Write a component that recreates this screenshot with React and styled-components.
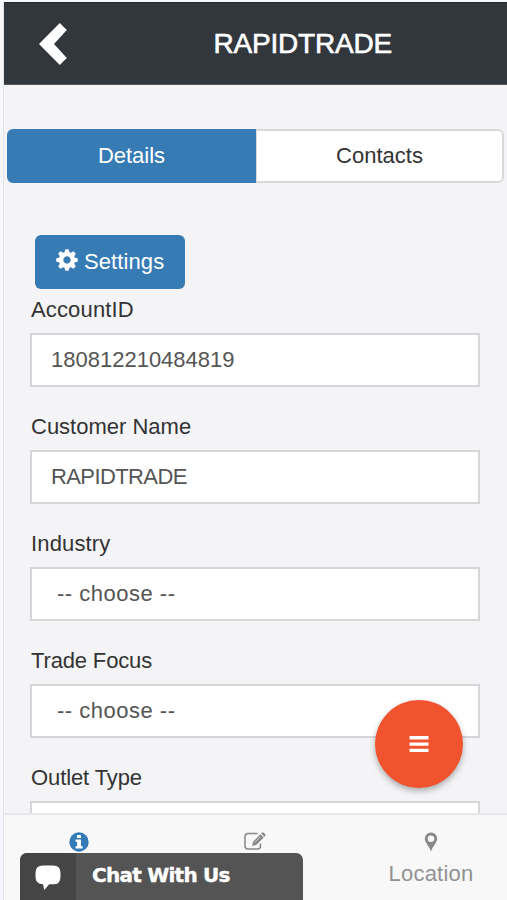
import React, { Component } from 'react';
import styled, { createGlobalStyle } from 'styled-components';

const GlobalStyle = createGlobalStyle`
  * {
    box-sizing: border-box;
  }
  body {
    margin: 0;
    overflow: hidden;
    background: #f4f5f8;
    font-family: "Liberation Sans", Arial, sans-serif;
    font-size: 22px;
    color: #333;
  }
  button, input {
    font: inherit;
  }
`;

const Frame = styled.div`
  height: 900px;
  padding: 2px 0 0 3px;
  background: #f6f7fa;
`;

const Screen = styled.div`
  position: relative;
  display: flex;
  flex-direction: column;
  height: 100%;
  border-left: 1px solid #e1e2e5;
  background: #f4f4f6;
  overflow: hidden;
`;

const Header = styled.header`
  flex: none;
  display: flex;
  align-items: center;
  height: 83px;
  padding: 0 115px 0 35px;
  background: #32373d;
  border-top: 1px solid #24292d;
  border-bottom: 1px solid #54585c;
`;

const BackButton = styled.button`
  display: flex;
  padding: 1px 0 0;
  border: none;
  background: none;
`;

const Title = styled.h1`
  flex: 1;
  margin: 0;
  font-size: 28px;
  font-weight: 400;
  line-height: 40px;
  letter-spacing: -0.2px;
  text-align: right;
  color: #fff;
  -webkit-text-stroke: 0.6px #fff;
`;

const Content = styled.main`
  flex: 1;
  min-height: 0;
  padding: 44px 3px 0;
  overflow: hidden;
`;

const Segments = styled.div`
  display: flex;
  height: 54px;
`;

const Segment = styled.button`
  flex: 1;
  padding: 0;
  border: 2px solid ${p => (p.$active ? '#377bb5' : '#d9d9db')};
  border-left-width: ${p => (p.$active ? '2px' : '1px')};
  border-radius: ${p => (p.$active ? '6px 0 0 6px' : '0 6px 6px 0')};
  background: ${p => (p.$active ? '#377bb5' : '#fff')};
  color: ${p => (p.$active ? '#fff' : '#333')};
`;

const Form = styled.form`
  display: flex;
  flex-direction: column;
  padding: 52px 23px 0;
`;

const SettingsButton = styled.button`
  display: flex;
  align-items: center;
  align-self: flex-start;
  gap: 6px;
  width: 150px;
  height: 54px;
  margin-left: 5px;
  padding: 0 0 0 21px;
  border: none;
  border-radius: 6px;
  background: #377bb5;
  color: #fff;
  letter-spacing: 0.1px;
`;

const Field = styled.label`
  display: flex;
  flex-direction: column;
  flex: none;
  height: 117px;
`;

const Label = styled.span`
  height: 44px;
  padding: 5px 0 0 1px;
  line-height: 32px;
  letter-spacing: ${p => p.$tracking || 0}px;
`;

const Input = styled.input`
  width: 450px;
  height: 54px;
  padding: 0 0 0 ${p => (p.$select ? '25px' : '19px')};
  border: 2px solid #d6d6d8;
  border-radius: 0;
  background: #fff;
  color: #555;
  letter-spacing: ${p => p.$tracking || 0}px;
  outline: none;
`;

const TabBar = styled.nav`
  flex: none;
  display: flex;
  height: 87px;
  border-top: 2px solid #e7e7e9;
  background: #f8f8f8;
`;

const Tab = styled.div`
  flex: none;
  display: flex;
  flex-direction: column;
  align-items: center;
  width: 176px;
  margin-left: ${p => (p.$first ? '-13px' : '0')};
  padding-top: 17px;
  color: ${p => (p.$active ? '#337ab7' : '#888')};
`;

const TabLabel = styled.span`
  margin-top: 8px;
  line-height: 28px;
  letter-spacing: 0.25px;
  color: #929292;
`;

const MenuButton = styled.button`
  position: absolute;
  right: 44px;
  bottom: 112px;
  display: flex;
  align-items: center;
  justify-content: center;
  width: 88px;
  height: 88px;
  padding: 0;
  border: none;
  border-radius: 50%;
  background: #f0532d;
  box-shadow: 0 3px 6px rgba(0, 0, 0, 0.3);
`;

const Chat = styled.div`
  position: absolute;
  left: 16px;
  bottom: 0;
  display: flex;
  width: 283px;
  height: 47px;
  border-radius: 7px 7px 0 0;
  background: #545454;
  overflow: hidden;
`;

const ChatIcon = styled.div`
  width: 56px;
  padding: 12px 0 0 15px;
  background: #454545;
`;

const ChatText = styled.span`
  padding-left: 16px;
  font-family: "DejaVu Sans", Verdana, sans-serif;
  font-size: 20px;
  font-weight: 700;
  line-height: 45px;
  letter-spacing: -0.75px;
  white-space: nowrap;
  color: #fff;
  -webkit-text-stroke: 0.4px #fff;
`;

const ChevronIcon = () => (
  <svg width="28" height="42" viewBox="0 0 28 42" fill="#fff">
    <path d="M20.8 0 27.8 7 15 21l12.8 14-7 7L0 21z" />
  </svg>
);

const CogIcon = () => (
  <svg width="22" height="22" viewBox="-11 -11 22 22" style={{ marginTop: -4 }}>
    <circle r="5.9" fill="none" stroke="#fff" strokeWidth="4.4" />
    {[0, 45, 90, 135, 180, 225, 270, 315].map(angle => (
      <path key={angle} d="M-2.7-7-1.6-10.8h3.2L2.7-7z" fill="#fff" transform={`rotate(${angle})`} />
    ))}
  </svg>
);

const InfoIcon = () => (
  <svg width="20" height="20" viewBox="0 0 20 20">
    <circle cx="10" cy="10" r="9.7" fill="currentColor" />
    <path d="M8 3h4v3H8zM6.5 7.5H12v6.7h1.7v2.3H6.5v-2.3h1.6V9.8H6.5z" fill="#fff" />
  </svg>
);

const EditIcon = () => (
  <svg width="22" height="20" viewBox="0 0 22 20">
    <path
      d="M13.5 1.5H4Q1 1.5 1 4.5V14q0 3 3 3h9.5q3 0 3-3v-2.5"
      fill="none"
      stroke="currentColor"
      strokeWidth="1.5"
    />
    <path d="m8 14 1.2-4.5 7.2-7.2 3.3 3.2-7.2 7.3zM17.2 1.5l1-1q.6-.5 1.2 0l2 2q.5.6 0 1.2l-1 1z" fill="currentColor" />
    <path d="m10.7 10.5 5.7-5.7" stroke="#ddd" strokeWidth=".8" />
  </svg>
);

const MarkerIcon = () => (
  <svg width="14" height="20" viewBox="0 0 14 20">
    <path
      fillRule="evenodd"
      fill="currentColor"
      d="M7 .4a6.2 6.2 0 0 1 6.2 6.2C13.2 10.7 8.7 14.5 7 19.4 5.3 14.5.8 10.7.8 6.6A6.2 6.2 0 0 1 7 .4m0 3a3.3 3.3 0 1 0 0 6.6 3.3 3.3 0 0 0 0-6.6"
    />
  </svg>
);

const MenuIcon = () => (
  <svg width="20" height="18" viewBox="0 0 20 18">
    <path d="M.5 1h19v3.4H.5zm0 6.4h19v3.3H.5zm0 6.3h19V17H.5z" fill="#fff" />
  </svg>
);

const BubbleIcon = () => (
  <svg width="26" height="26" viewBox="0 0 26 26" fill="#fff">
    <path d="M8 .5h10q7.5 0 7.5 7v4.4q0 7.3-7.5 7.4h-3.8L9.3 25 8 19.3Q.5 19.2.5 12V7.5Q.5.5 8 .5z" />
  </svg>
);

const FIELDS = [
  { label: 'AccountID', value: '180812210484819', labelTracking: 0.15 },
  { label: 'Customer Name', value: 'RAPIDTRADE', tracking: -0.6 },
  { label: 'Industry', value: '-- choose --', select: true, labelTracking: 0.15, tracking: 0.5 },
  { label: 'Trade Focus', value: '-- choose --', select: true, labelTracking: -0.15, tracking: 0.5 },
  { label: 'Outlet Type', value: '', select: true, labelTracking: -0.1 }
];

export default class App extends Component {
  constructor(props) {
    super(props);
    this.state = { segment: 'Details' };
  }
  renderSegment(name) {
    return (
      <Segment key={name} $active={this.state.segment === name} onClick={() => this.setState({ segment: name })}>
        {name}
      </Segment>
    );
  }
  renderField(field) {
    return (
      <Field key={field.label}>
        <Label $tracking={field.labelTracking}>{field.label}</Label>
        <Input readOnly value={field.value} $select={field.select} $tracking={field.tracking} />
      </Field>
    );
  }
  render() {
    return (
      <>
        <GlobalStyle />
        <Frame>
          <Screen>
            <Header>
              <BackButton><ChevronIcon /></BackButton>
              <Title>RAPIDTRADE</Title>
            </Header>
            <Content>
              <Segments>{['Details', 'Contacts'].map(this.renderSegment.bind(this))}</Segments>
              <Form>
                <SettingsButton type="button"><CogIcon />Settings</SettingsButton>
                {FIELDS.map(this.renderField)}
              </Form>
            </Content>
            <TabBar>
              <Tab $first $active><InfoIcon /></Tab>
              <Tab><EditIcon /></Tab>
              <Tab>
                <MarkerIcon />
                <TabLabel>Location</TabLabel>
              </Tab>
            </TabBar>
            <MenuButton><MenuIcon /></MenuButton>
            <Chat>
              <ChatIcon><BubbleIcon /></ChatIcon>
              <ChatText>Chat With Us</ChatText>
            </Chat>
          </Screen>
        </Frame>
      </>
    );
  }
}
